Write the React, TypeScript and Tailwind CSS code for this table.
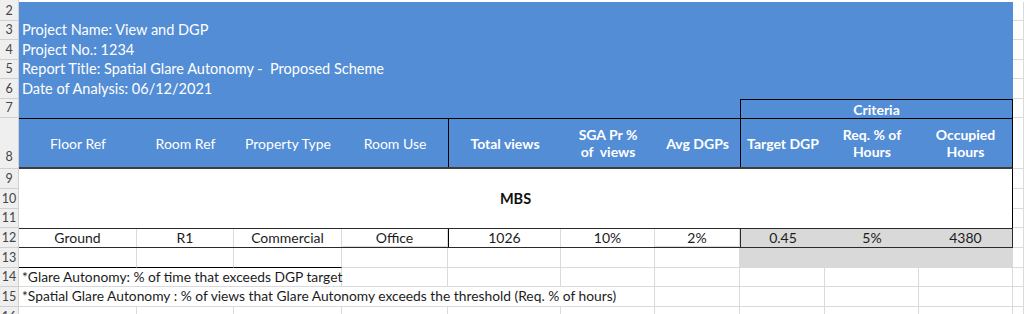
import React from "react";

// excel-ish sheet: row header column + columns A..J, K is whatever is left
const grid = "border-[#dadada]";
const blue = "bg-[#538dd5]";

const RowHead = ({ n, className = "" }: { n?: number; className?: string }) => (
   <div
      className={`w-[19px] shrink-0 flex items-end justify-center border-r border-b border-[#d0d0d0] bg-[#efefef] text-[12.5px] leading-[18px] text-[#444] ${className}`}
   >
      {n}
   </div>
);

const Cell = ({
   className = "",
   children,
}: {
   className?: string;
   children?: React.ReactNode;
}) => (
   <div
      className={`shrink-0 flex items-center justify-center border-r border-b ${grid} ${className}`}
   >
      {children}
   </div>
);

// the plain white cells from some column up to K, used by the footer rows
const Plain = ({ from }: { from: number }) => {
   const cols = [
      "w-[118px]",
      "w-[97px]",
      "w-[108px]",
      "w-[106px]",
      "w-[113px]",
      "w-[94px]",
      "w-[85px]",
      "w-[85px]",
      "w-[94px]",
      "w-[94px]",
   ];
   return (
      <>
         {cols.slice(from).map((w, i) => (
            <Cell key={i} className={w} />
         ))}
         <Cell className="flex-1" />
      </>
   );
};

const info = [
   { n: 2, h: "h-[19px]", text: "" },
   { n: 3, h: "h-[19px]", text: "Project Name: View and DGP" },
   { n: 4, h: "h-[20px]", text: "Project No.: 1234" },
   { n: 5, h: "h-[19px]", text: "Report Title: Spatial Glare Autonomy -  Proposed Scheme" },
   { n: 6, h: "h-[20px]", text: "Date of Analysis: 06/12/2021" },
];

const App: React.FC = () => {
   return (
      <div className="w-[1024px] h-[314px] overflow-hidden bg-white font-[Lato,'Noto_Sans',sans-serif] text-[14px] text-[#1c1c1c]">
         {/* row 1, only a sliver shows */}
         <div className="flex h-[2px]">
            <RowHead className="border-b-0" />
            <div className="flex-1" />
         </div>

         {info.map((r) => (
            <div key={r.n} className={`flex ${r.h}`}>
               <RowHead n={r.n} />
               <div
                  className={`w-[994px] shrink-0 ${blue} pl-[3px] flex items-end text-[14.5px] leading-[20px] whitespace-pre text-white`}
               >
                  {r.text}
               </div>
               <Cell className="flex-1" />
            </div>
         ))}

         {/* row 7 */}
         <div className="flex h-[19px]">
            <RowHead n={7} />
            <div className={`w-[721px] shrink-0 ${blue}`} />
            <div
               className={`w-[273px] shrink-0 ${blue} border-t border-x border-black flex items-center justify-center font-bold text-white`}
            >
               Criteria
            </div>
            <Cell className="flex-1" />
         </div>

         {/* row 8, table head */}
         <div className="flex h-[51px]">
            <RowHead n={8} className="pb-[2px]" />
            <div
               className={`w-[994px] shrink-0 flex ${blue} border-t border-r border-black border-b-2 border-b-[#3d3d3d] text-white text-center leading-[17px] [&>div]:flex [&>div]:items-center [&>div]:justify-center [&>div]:shrink-0`}
            >
               <div className="w-[118px]">Floor Ref</div>
               <div className="w-[97px]">Room Ref</div>
               <div className="w-[108px]">Property Type</div>
               <div className="w-[106px]">Room Use</div>
               <div className="w-[113px] border-l border-black font-bold">Total views</div>
               <div className="w-[94px] font-bold whitespace-pre">
                  {"SGA Pr %\nof  views"}
               </div>
               <div className="w-[85px] font-bold">Avg DGPs</div>
               <div className="w-[85px] border-l border-black font-bold">Target DGP</div>
               <div className="w-[94px] font-bold whitespace-pre">{"Req. % of\nHours"}</div>
               <div className="w-[93px] font-bold whitespace-pre">{"Occupied\nHours"}</div>
            </div>
            <Cell className="flex-1" />
         </div>

         {/* rows 9-11, merged MBS block */}
         <div className="flex h-[59px]">
            <div className="flex flex-col">
               <RowHead n={9} className="h-[20px]" />
               <RowHead n={10} className="h-[20px]" />
               <RowHead n={11} className="h-[19px]" />
            </div>
            <div className="w-[994px] shrink-0 border-r border-black flex items-center justify-center font-bold text-[14.5px] text-[#111]">
               MBS
            </div>
            <div className="flex-1 flex flex-col">
               <Cell className="h-[20px]" />
               <Cell className="h-[20px]" />
               <Cell className="h-[19px]" />
            </div>
         </div>

         {/* row 12, data */}
         <div className="flex h-[20px]">
            <RowHead n={12} />
            <div className="w-[994px] shrink-0 flex border-y border-r border-[#2a2a2a] leading-[18px]">
               <Cell className="w-[118px] border-b-0">Ground</Cell>
               <Cell className="w-[97px] border-b-0">R1</Cell>
               <Cell className="w-[108px] border-b-0">Commercial</Cell>
               <Cell className="w-[106px] border-0">Office</Cell>
               <Cell className="w-[113px] border-b-0 border-l border-l-black">1026</Cell>
               <Cell className="w-[94px] border-b-0">10%</Cell>
               <Cell className="w-[85px] border-0">2%</Cell>
               <div className="w-[273px] flex bg-[#d9d9d9] border-l border-[#2a2a2a] [&>div]:flex [&>div]:justify-center [&>div]:items-center">
                  <div className="w-[84px]">0.45</div>
                  <div className="w-[94px]">5%</div>
                  <div className="w-[93px]">4380</div>
               </div>
            </div>
            <Cell className="flex-1" />
         </div>

         {/* row 13 */}
         <div className="flex h-[20px]">
            <RowHead n={13} />
            <Cell className="w-[118px] border-b-black" />
            <Cell className="w-[97px] border-b-black" />
            <Cell className="w-[108px] border-b-black" />
            <Cell className="w-[106px]" />
            <Cell className="w-[113px]" />
            <Cell className="w-[94px]" />
            <Cell className="w-[85px]" />
            <div className="w-[273px] shrink-0 bg-[#d9d9d9]" />
            <Cell className="flex-1" />
         </div>

         {/* notes */}
         <div className="flex h-[19px] text-[13.8px]">
            <RowHead n={14} />
            <Cell className="w-[323px] justify-start pl-[3px] whitespace-nowrap">
               *Glare Autonomy: % of time that exceeds DGP target
            </Cell>
            <Plain from={3} />
         </div>
         <div className="flex h-[20px] text-[13.8px]">
            <RowHead n={15} />
            <Cell className="w-[636px] justify-start pl-[3px] whitespace-nowrap">
               *Spatial Glare Autonomy : % of views that Glare Autonomy exceeds the threshold (Req. % of hours)
            </Cell>
            <Plain from={6} />
         </div>
         <div className="flex h-[20px]">
            <RowHead n={16} />
            <Plain from={0} />
         </div>
      </div>
   );
};

export default App;
